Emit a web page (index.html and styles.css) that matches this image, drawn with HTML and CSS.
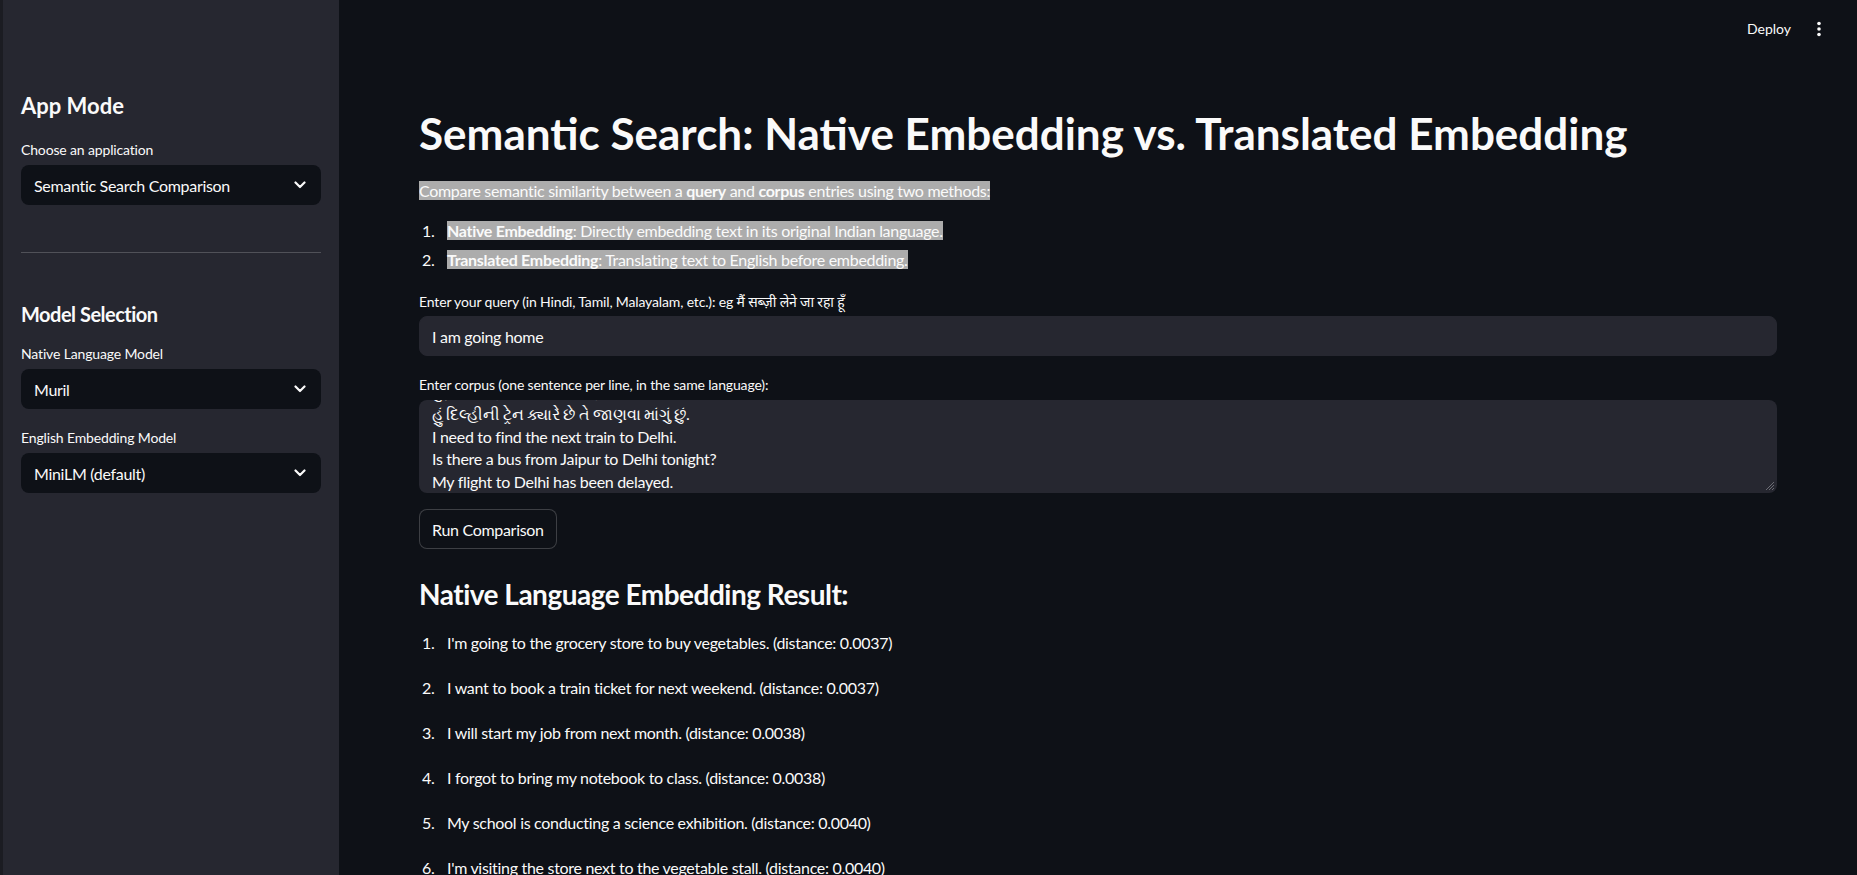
FILE: index.html
```html
<!DOCTYPE html>
<html lang="en">
<head>
<meta charset="utf-8">
<title>Semantic Search</title>
<link rel="stylesheet" href="styles.css">
</head>
<body>
<div class="app">
  <aside class="sidebar">
    <h2 class="side-title first">App Mode</h2>
    <div class="field-label">Choose an application</div>
    <div class="select"><span>Semantic Search Comparison</span><svg class="chev" width="12" height="8" viewBox="0 0 12 8"><path d="M1.5 1.5 L6 6 L10.5 1.5" fill="none" stroke="#fafafa" stroke-width="2.2" stroke-linecap="round" stroke-linejoin="round"/></svg></div>
    <hr class="divider">
    <h3 class="side-title second">Model Selection</h3>
    <div class="field-label l1">Native Language Model</div>
    <div class="select"><span>Muril</span><svg class="chev" width="12" height="8" viewBox="0 0 12 8"><path d="M1.5 1.5 L6 6 L10.5 1.5" fill="none" stroke="#fafafa" stroke-width="2.2" stroke-linecap="round" stroke-linejoin="round"/></svg></div>
    <div class="field-label l2">English Embedding Model</div>
    <div class="select"><span>MiniLM (default)</span><svg class="chev" width="12" height="8" viewBox="0 0 12 8"><path d="M1.5 1.5 L6 6 L10.5 1.5" fill="none" stroke="#fafafa" stroke-width="2.2" stroke-linecap="round" stroke-linejoin="round"/></svg></div>
  </aside>
  <main class="main">
    <header class="topbar">
      <span class="deploy">Deploy</span>
      <svg class="more" width="6" height="16" viewBox="0 0 6 16"><circle cx="3" cy="2.5" r="1.8" fill="#fafafa"/><circle cx="3" cy="8" r="1.8" fill="#fafafa"/><circle cx="3" cy="13.5" r="1.8" fill="#fafafa"/></svg>
    </header>
    <section class="content">
      <h1 class="title">Semantic Search: Native Embedding vs. Translated Embedding</h1>
      <p class="intro"><span class="hl">Compare semantic similarity between a <b>query</b> and <b>corpus</b> entries using two methods:</span></p>
      <ol class="methods">
        <li><span class="hl"><b>Native Embedding</b>: Directly embedding text in its original Indian language.</span></li>
        <li><span class="hl"><b>Translated Embedding</b>: Translating text to English before embedding.</span></li>
      </ol>
      <div class="field-label q">Enter your query (in Hindi, Tamil, Malayalam, etc.): eg मैं सब्ज़ी लेने जा रहा हूँ</div>
      <input class="query" type="text" value="I am going home">
      <div class="field-label c">Enter corpus (one sentence per line, in the same language):</div>
      <div class="corpus">
        <div class="corpus-lines">
          <div>मुझे अगले हफ़्ते दिल्ली जाना है।</div>
          <div>હું દિલ્હીની ટ્રેન ક્યારે છે તે જાણવા માંગું છું.</div>
          <div>I need to find the next train to Delhi.</div>
          <div>Is there a bus from Jaipur to Delhi tonight?</div>
          <div>My flight to Delhi has been delayed.</div>
        </div>
        <svg class="grip" width="10" height="10" viewBox="0 0 10 10"><path d="M9 1 L1 9 M9 4 L4 9 M9 7 L7 9" stroke="#6b6c74" stroke-width="1"/></svg>
      </div>
      <button class="run">Run Comparison</button>
      <h3 class="result-title">Native Language Embedding Result:</h3>
      <ol class="results">
        <li>I'm going to the grocery store to buy vegetables. (distance: 0.0037)</li>
        <li>I want to book a train ticket for next weekend. (distance: 0.0037)</li>
        <li>I will start my job from next month. (distance: 0.0038)</li>
        <li>I forgot to bring my notebook to class. (distance: 0.0038)</li>
        <li>My school is conducting a science exhibition. (distance: 0.0040)</li>
        <li>I'm visiting the store next to the vegetable stall. (distance: 0.0040)</li>
      </ol>
    </section>
  </main>
</div>
</body>
</html>
```
FILE: styles.css
```css
* { box-sizing: border-box; }
html, body {
  margin: 0;
  padding: 0;
  height: 100%;
  overflow: hidden;
}
body {
  background: #0e1117;
  color: #fafafa;
  font-family: Lato, "Noto Sans", "Noto Sans CJK SC", sans-serif;
  font-size: 16px;
  letter-spacing: -0.3px;
}
.app {
  display: flex;
  height: 875px;
}
.sidebar {
  width: 339px;
  flex: none;
  background: #262730;
  border-left: 3px solid #1b1c22;
  padding: 91px 18px 0 18px;
}
.side-title {
  margin: 0;
  font-weight: 700;
}
.side-title.first {
  font-size: 22px;
  line-height: 29px;
  letter-spacing: 0;
}
.side-title.second {
  margin-top: 49px;
  font-size: 20px;
  line-height: 24px;
  letter-spacing: -0.5px;
}
.field-label {
  font-size: 14px;
  line-height: 22px;
  height: 22px;
  letter-spacing: -0.15px;
}
.sidebar .field-label { margin-top: 19px; margin-bottom: 4px; }
.sidebar .field-label.l1 { margin-top: 17px; }
.sidebar .field-label.l2 { margin-top: 18px; }
.select {
  height: 40px;
  border-radius: 8px;
  background: #0e1117;
  display: flex;
  align-items: center;
  justify-content: space-between;
  padding: 0 15px 0 13px;
  font-size: 16px;
}
.chev { display: block; }
.divider {
  border: none;
  border-top: 1px solid rgba(250,250,250,0.2);
  margin: 47px 0 0 0;
  height: 0;
}

.main {
  flex: 1;
  min-width: 0;
}
.topbar {
  height: 57px;
  display: flex;
  align-items: center;
  justify-content: flex-end;
  gap: 25px;
  padding-right: 35px;
}
.deploy { font-size: 14px; letter-spacing: 0; }
.more { display: block; }
.content {
  padding: 50px 80px 0 80px;
}
.title {
  margin: 0;
  font-size: 44px;
  font-weight: 700;
  line-height: 53px;
  letter-spacing: 0;
}
.intro {
  margin: 18px 0 0 0;
  line-height: 26px;
}
.hl {
  background: #acacac;
  color: #fafafa;
}
.hl b { font-weight: 700; }
.methods, .results {
  list-style: none;
  padding: 0;
  counter-reset: item;
}
.methods li, .results li {
  counter-increment: item;
  line-height: 26px;
}
.methods li::before, .results li::before {
  content: counter(item) ".";
  display: inline-block;
  width: 25px;
  padding-left: 3px;
  box-sizing: content-box;
}
.methods { margin: 14px 0 0 0; }
.methods li { margin-bottom: 3px; }
.field-label.q { margin-top: 18px; margin-bottom: 3px; }
.query {
  display: block;
  width: 100%;
  height: 40px;
  border: 1px solid #262730;
  border-radius: 8px;
  background: #262730;
  color: #fafafa;
  font-family: inherit;
  font-size: 16px;
  letter-spacing: -0.3px;
  padding: 0 12px;
  outline: none;
}
.field-label.c { margin-top: 18px; margin-bottom: 4px; }
.corpus {
  position: relative;
  height: 93px;
  border-radius: 8px;
  background: #262730;
  overflow: hidden;
  display: flex;
  flex-direction: column;
  justify-content: flex-end;
  padding: 0 12px 0 13px;
}
.corpus-lines { line-height: 22.5px; }
.grip {
  position: absolute;
  right: 2px;
  bottom: 2px;
}
.run {
  margin-top: 16px;
  height: 40px;
  padding: 0 12px;
  background: #0e1117;
  color: #fafafa;
  border: 1px solid rgba(250,250,250,0.2);
  border-radius: 8px;
  font-family: inherit;
  font-size: 16px;
  letter-spacing: -0.3px;
  display: block;
}
.result-title {
  margin: 28px 0 0 0;
  font-size: 28px;
  font-weight: 700;
  line-height: 34px;
  letter-spacing: -0.5px;
}
.results { margin: 19px 0 0 0; }
.results li { margin-bottom: 19px; }
```
